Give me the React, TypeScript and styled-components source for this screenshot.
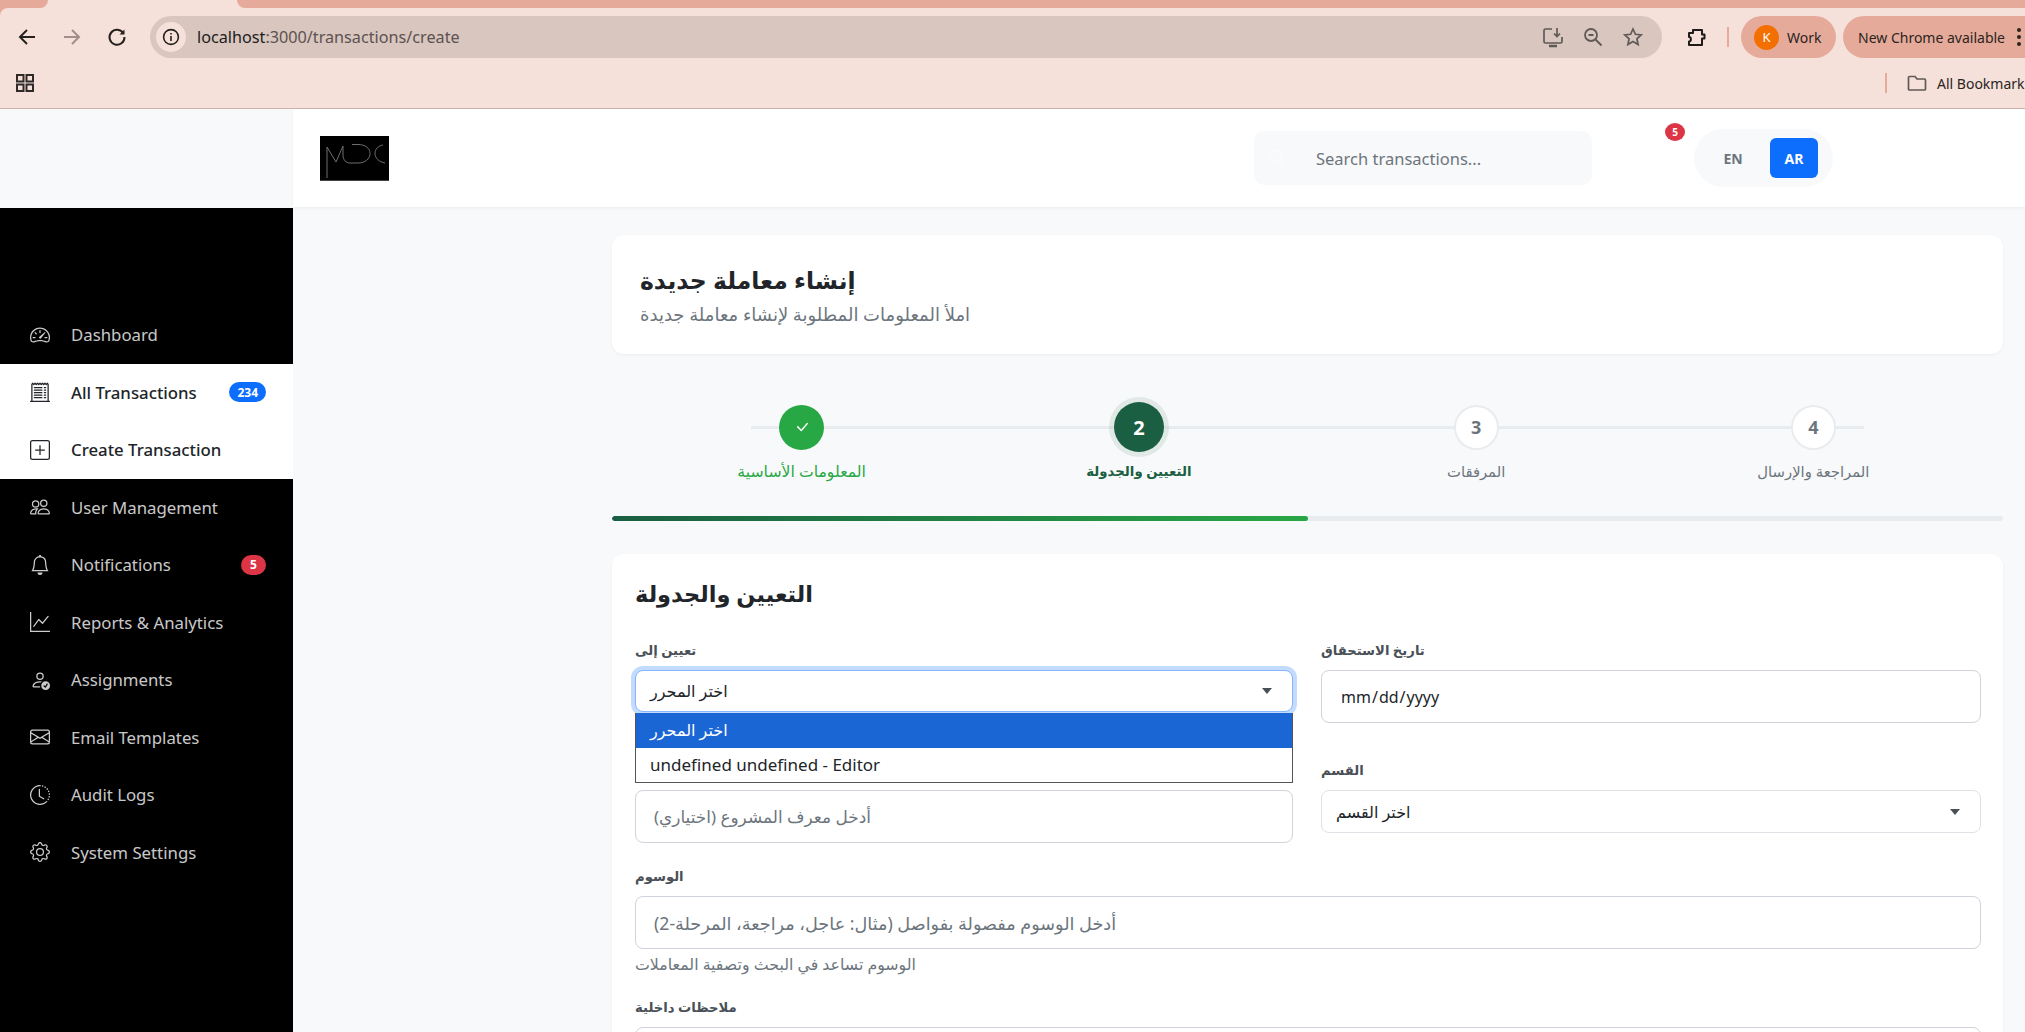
import React from 'react';
import styled, { createGlobalStyle } from 'styled-components';
import {
  BsBell,
  BsCheckLg,
  BsClockHistory,
  BsEnvelope,
  BsGear,
  BsGraphUp,
  BsPeople,
  BsPersonCheck,
  BsPlusSquare,
  BsReceiptCutoff,
  BsSpeedometer2,
} from 'react-icons/bs';

const FONT = `'Noto Sans', 'DejaVu Sans', sans-serif`;

const GlobalStyle = createGlobalStyle`
  html, body {
    margin: 0;
    padding: 0;
    height: 100%;
    overflow: hidden;
    background: #f8f9fa;
    font-family: ${FONT};
  }
  * { box-sizing: border-box; }
`;

const Page = styled.div`
  width: 2025px;
  height: 1032px;
  display: flex;
  flex-direction: column;
  overflow: hidden;
`;

/* browser chrome */
const ChromeFrame = styled.div`
  height: 109px;
  flex: none;
  background: #e5aa99;
  border-bottom: 1px solid #c9b3ac;
  display: flex;
  flex-direction: column;
`;

const TabStrip = styled.div`
  height: 8px;
  display: flex;
  background: #f5e1da;
`;

const TabEdge = styled.div<{ $side: 'left' | 'right' }>`
  background: #e5aa99;
  ${({ $side }) =>
    $side === 'left'
      ? `width: 48px; border-bottom-right-radius: 10px;`
      : `flex: 1; border-bottom-left-radius: 10px;`}
`;

const ActiveTab = styled.div`
  width: 189px;
  background: #f5e1da;
`;

const Toolbar = styled.div`
  height: 56px;
  display: flex;
  align-items: center;
  padding: 2px 0 0 15px;
  background: #f5e1da;
  border-top-left-radius: 8px;
  overflow: hidden;
`;

const NavButton = styled.div<{ $muted?: boolean }>`
  width: 24px;
  height: 24px;
  flex: none;
  margin-right: 21px;
  color: ${({ $muted }) => ($muted ? '#a08f8a' : '#26201e')};
`;

const UrlBar = styled.div`
  width: 1512px;
  height: 42px;
  flex: none;
  display: flex;
  align-items: center;
  padding: 0 18px 0 6px;
  border-radius: 21px;
  background: #d8c6bf;
`;

const InfoBubble = styled.div`
  width: 30px;
  height: 30px;
  flex: none;
  border-radius: 50%;
  background: #f5e1da;
  display: flex;
  align-items: center;
  justify-content: center;
  color: #26201e;
`;

const UrlText = styled.div`
  margin-left: 11px;
  font-size: 16.2px;
  color: #5d5250;
  white-space: nowrap;
`;

const UrlHost = styled.span`
  color: #221d1c;
`;

const UrlIcons = styled.div`
  margin-left: auto;
  display: flex;
  align-items: center;
  gap: 18px;
  color: #5f5a58;
`;

const ExtensionSlot = styled.div`
  width: 24px;
  height: 24px;
  flex: none;
  margin-left: 22px;
  color: #1f1b1a;
`;

const ChromeDivider = styled.div`
  width: 2px;
  height: 20px;
  flex: none;
  background: #e5aa99;
`;

const ToolbarDivider = styled(ChromeDivider)`
  margin-left: 19px;
`;

const ProfilePill = styled.div`
  width: 95px;
  height: 42px;
  flex: none;
  margin-left: 12px;
  border-radius: 21px;
  background: #e5aa99;
  display: flex;
  align-items: center;
  padding-left: 13px;
  gap: 8px;
  font-size: 14px;
  color: #2b2422;
`;

const Avatar = styled.div`
  width: 25px;
  height: 25px;
  border-radius: 50%;
  background: #f37000;
  color: #fff;
  font-size: 13px;
  display: flex;
  align-items: center;
  justify-content: center;
`;

const UpdatePill = styled.div`
  width: 220px;
  height: 42px;
  flex: none;
  margin-left: 7px;
  border-radius: 21px;
  background: #e5aa99;
  display: flex;
  align-items: center;
  padding-left: 15px;
  gap: 12px;
  font-size: 14px;
  color: #2b2422;
  white-space: nowrap;
`;

const MenuDots = styled.span`
  display: flex;
  flex-direction: column;
  gap: 3px;

  i {
    width: 4px;
    height: 4px;
    border-radius: 50%;
    background: #2b2422;
    display: block;
  }
`;

const BookmarkBar = styled.div`
  flex: 1;
  display: flex;
  align-items: center;
  padding: 0 0 6px 15px;
  background: #f5e1da;
  overflow: hidden;
`;

const BookmarkRight = styled.div`
  margin-left: auto;
  width: 140px;
  flex: none;
  display: flex;
  align-items: center;
  gap: 10px;
  font-size: 14px;
  color: #2b2422;
  white-space: nowrap;
`;

const FolderSlot = styled.div`
  width: 20px;
  height: 20px;
  margin-left: 10px;
  flex: none;
  color: #5f5a58;
`;

/* app shell */
const Shell = styled.div`
  flex: 1;
  min-height: 0;
  display: flex;
`;

const Sidebar = styled.aside`
  width: 293px;
  flex: none;
  display: flex;
  flex-direction: column;
`;

const SidebarTop = styled.div`
  height: 99px;
  flex: none;
  background: #f8f9fa;
`;

const SidebarNav = styled.nav`
  flex: 1;
  background: #000;
  padding-top: 98px;
`;

const NavItem = styled.div<{ $active?: boolean }>`
  height: 57.5px;
  display: flex;
  align-items: center;
  padding: 0 27px 0 30px;
  font-size: 16.8px;
  font-weight: ${({ $active }) => ($active ? 500 : 400)};
  background: ${({ $active }) => ($active ? '#fff' : 'transparent')};
  color: ${({ $active }) => ($active ? '#212529' : 'rgba(255, 255, 255, 0.8)')};

  svg {
    flex: none;
    margin-right: 21px;
  }
`;

const NavBadge = styled.span<{ $tone: 'blue' | 'red' }>`
  margin-left: auto;
  height: 20px;
  min-width: 25px;
  padding: 0 8px;
  border-radius: 10px;
  background: ${({ $tone }) => ($tone === 'blue' ? '#0d6efd' : '#dc3545')};
  color: #fff;
  font-size: 12px;
  font-weight: 700;
  display: flex;
  align-items: center;
  justify-content: center;
`;

const MainColumn = styled.div`
  flex: 1;
  min-width: 0;
  display: flex;
  flex-direction: column;
`;

const Header = styled.header`
  height: 98px;
  flex: none;
  background: #fff;
  box-shadow: 0 1px 3px rgba(0, 0, 0, 0.06);
  display: flex;
  align-items: center;
  padding: 0 192px 0 27px;
  position: relative;
`;

const LogoBox = styled.div`
  width: 69px;
  height: 45px;
  flex: none;
  background: #000;
`;

const SearchBox = styled.div`
  width: 338px;
  height: 54px;
  margin-left: auto;
  display: flex;
  align-items: center;
  padding-left: 14px;
  gap: 30px;
  border-radius: 10px;
  background: #f8f9fa;
  color: #fbfcfd;
  font-size: 16.5px;
`;

const SearchPlaceholder = styled.span`
  color: #6c757d;
`;

const BellButton = styled.div`
  width: 40px;
  height: 40px;
  margin-left: 48px;
  flex: none;
  position: relative;
  color: #fff;
  display: flex;
  align-items: center;
  justify-content: center;
`;

const BellBadge = styled.span`
  position: absolute;
  top: -15px;
  right: -5px;
  width: 20px;
  height: 18px;
  border-radius: 50%;
  background: #dc3545;
  color: #fff;
  font-size: 10px;
  font-weight: 700;
  display: flex;
  align-items: center;
  justify-content: center;
`;

const LangToggle = styled.div`
  width: 139px;
  height: 58px;
  margin-left: 14px;
  flex: none;
  border-radius: 29px;
  background: #f8f9fa;
  display: flex;
  align-items: center;
  justify-content: flex-end;
  padding-right: 15px;
  gap: 13px;
`;

const LangButton = styled.div<{ $active?: boolean }>`
  width: 48px;
  height: 40px;
  border-radius: 6px;
  display: flex;
  align-items: center;
  justify-content: center;
  font-size: 14px;
  font-weight: 700;
  background: ${({ $active }) => ($active ? '#0d6efd' : 'transparent')};
  color: ${({ $active }) => ($active ? '#fff' : '#6c757d')};
`;

const Content = styled.main`
  flex: 1;
  min-height: 0;
  overflow: hidden;
  background: #f8f9fa;
  padding: 28px 22px 0 319px;
`;

const TitleCard = styled.section`
  height: 119px;
  padding: 27px 28px 0;
  border-radius: 12px;
  background: #fff;
  box-shadow: 0 1px 3px rgba(0, 0, 0, 0.05);
`;

const PageTitle = styled.h1`
  margin: 0;
  font-size: 23.5px;
  line-height: 36px;
  font-weight: 600;
  color: #212529;
`;

const PageSubtitle = styled.p`
  margin: 2px 0 0;
  font-size: 18px;
  line-height: 28px;
  color: #6c757d;
`;

const Stepper = styled.div`
  margin-top: 48px;
  height: 90px;
  padding: 0 21px;
  display: grid;
  grid-template-columns: repeat(4, 1fr);
  position: relative;

  &::before {
    content: '';
    position: absolute;
    left: 139px;
    right: 139px;
    top: 24px;
    height: 3px;
    background: #e9ecef;
  }
`;

const Step = styled.div`
  display: flex;
  flex-direction: column;
  align-items: center;
  position: relative;
`;

const StepCircleSlot = styled.div`
  height: 50px;
  display: flex;
  align-items: center;
  justify-content: center;
`;

const StepCircle = styled.div<{ $state: 'done' | 'current' | 'todo' }>`
  border-radius: 50%;
  display: flex;
  align-items: center;
  justify-content: center;
  font-weight: 700;
  ${({ $state }) =>
    $state === 'done' &&
    `width: 45px; height: 45px; background: #28a745; color: #fff;`}
  ${({ $state }) =>
    $state === 'current' &&
    `width: 50px; height: 50px; background: #1a5f42; color: #fff; font-size: 20px; box-shadow: 0 0 0 5px rgba(26, 95, 66, 0.1);`}
  ${({ $state }) =>
    $state === 'todo' &&
    `width: 45px; height: 45px; background: #fff; color: #6c757d; font-size: 18px; border: 2px solid #e9ecef;`}
`;

const StepLabel = styled.div<{ $state: 'done' | 'current' | 'todo' }>`
  margin-top: 9px;
  line-height: 21px;
  font-size: ${({ $state }) =>
    $state === 'done' ? '15.7px' : $state === 'current' ? '13.3px' : '14.8px'};
  font-weight: ${({ $state }) => ($state === 'current' ? 600 : 400)};
  color: ${({ $state }) =>
    $state === 'done' ? '#28a745' : $state === 'current' ? '#1a5f42' : '#6c757d'};
`;

const ProgressTrack = styled.div`
  margin-top: 24px;
  height: 5px;
  border-radius: 3px;
  background: #e9ecef;
  overflow: hidden;
`;

const ProgressFill = styled.div`
  height: 100%;
  border-radius: 3px;
  background: linear-gradient(90deg, #1a5f42, #28a745);
`;

const FormCard = styled.section`
  margin-top: 33px;
  padding: 22px 22px 40px 23px;
  border-radius: 12px;
  background: #fff;
  box-shadow: 0 1px 3px rgba(0, 0, 0, 0.05);
`;

const FormTitle = styled.h2`
  margin: 0 0 28px;
  font-size: 22.5px;
  line-height: 36px;
  font-weight: 600;
  color: #212529;
`;

const FormGrid = styled.div`
  display: grid;
  grid-template-columns: 658px 660px;
  column-gap: 28px;
  row-gap: 37px;
  margin-bottom: 23px;
`;

const Field = styled.div`
  position: relative;
  min-width: 0;
`;

const Label = styled.div`
  height: 21px;
  margin-bottom: 9px;
  font-size: 13.2px;
  line-height: 21px;
  font-weight: 600;
  color: #495057;
`;

const inputBase = `
  display: block;
  width: 100%;
  border: 1px solid #ced4da;
  border-radius: 8px;
  background: #fff;
  font-family: ${FONT};
  font-size: 16px;
  color: #212529;
  outline: none;
`;

const TextInput = styled.input<{ $size: number }>`
  ${inputBase}
  height: 53px;
  padding: 0 18px;
  font-size: ${({ $size }) => $size}px;
  text-align: left;

  &::placeholder {
    color: #6c757d;
    opacity: 1;
  }
`;

const DateInput = styled.input`
  ${inputBase}
  height: 53px;
  padding: 0 18px;
`;

const SelectBox = styled.div<{ $open?: boolean }>`
  ${inputBase}
  height: ${({ $open }) => ($open ? '42px' : '43px')};
  margin-top: ${({ $open }) => ($open ? '1px' : '0')};
  padding: 0 20px 0 14px;
  display: flex;
  align-items: center;
  justify-content: space-between;
  border-color: ${({ $open }) => ($open ? '#86b7fe' : '#dee2e6')};
  box-shadow: ${({ $open }) => ($open ? '0 0 0 4px rgba(13, 110, 253, 0.25)' : 'none')};
`;

const Caret = styled.span`
  width: 0;
  height: 0;
  border-left: 5px solid transparent;
  border-right: 5px solid transparent;
  border-top: 6px solid #495057;
`;

const OptionList = styled.div`
  position: absolute;
  left: 0;
  right: 0;
  top: 73px;
  z-index: 5;
  border: 1px solid #555;
  border-top: none;
  background: #fff;
  font-size: 16px;
  color: #212529;
`;

const Option = styled.div<{ $selected?: boolean }>`
  height: 34.5px;
  padding: 0 14px;
  display: flex;
  align-items: center;
  font-size: ${({ $selected }) => ($selected ? '16px' : '17px')};
  background: ${({ $selected }) => ($selected ? '#1a66d4' : '#fff')};
  color: ${({ $selected }) => ($selected ? '#fff' : '#212529')};
`;

const HelpText = styled.div`
  margin: 5px 0 23px;
  font-size: 15.8px;
  line-height: 20px;
  color: #6c757d;
`;

const NotesBox = styled.div`
  ${inputBase}
  height: 120px;
`;

const navItems = [
  { label: 'Dashboard', icon: BsSpeedometer2 },
  { label: 'All Transactions', icon: BsReceiptCutoff, active: true, badge: '234', tone: 'blue' as const },
  { label: 'Create Transaction', icon: BsPlusSquare, active: true },
  { label: 'User Management', icon: BsPeople },
  { label: 'Notifications', icon: BsBell, badge: '5', tone: 'red' as const },
  { label: 'Reports & Analytics', icon: BsGraphUp },
  { label: 'Assignments', icon: BsPersonCheck },
  { label: 'Email Templates', icon: BsEnvelope },
  { label: 'Audit Logs', icon: BsClockHistory },
  { label: 'System Settings', icon: BsGear },
];

const steps = [
  { label: 'المعلومات الأساسية', state: 'done' as const, mark: null },
  { label: 'التعيين والجدولة', state: 'current' as const, mark: '2' },
  { label: 'المرفقات', state: 'todo' as const, mark: '3' },
  { label: 'المراجعة والإرسال', state: 'todo' as const, mark: '4' },
];

const MdcLogo = () => (
  <svg width="69" height="45" viewBox="0 0 69 45" fill="none" stroke="#6f6f6f" strokeWidth="1">
    <path d="M7 42V11L16 26L23 10V19C23 24 26 27 30 27H38C45 27 50 23 50 17.5C50 12 45 8.5 38 8.5H32" />
    <path d="M63 9C58 10 55 13 55 17.5C55 22 59 26 65 27" />
    <path d="M0 44.5H69" stroke="#444" />
  </svg>
);

const App: React.FC = () => {
  return (
    <Page>
      <GlobalStyle />
      <ChromeFrame>
        <TabStrip>
          <TabEdge $side="left" />
          <ActiveTab />
          <TabEdge $side="right" />
        </TabStrip>
        <Toolbar>
          <NavButton>
            <svg width="24" height="24" viewBox="0 0 24 24" fill="none" stroke="currentColor" strokeWidth="2">
              <path d="M20 12H5M12 5l-7 7 7 7" />
            </svg>
          </NavButton>
          <NavButton $muted>
            <svg width="24" height="24" viewBox="0 0 24 24" fill="none" stroke="currentColor" strokeWidth="2">
              <path d="M4 12h15M12 5l7 7-7 7" />
            </svg>
          </NavButton>
          <NavButton>
            <svg width="24" height="24" viewBox="0 0 24 24" fill="none" stroke="currentColor" strokeWidth="2">
              <path d="M18.5 8.5A7.5 7.5 0 1 0 19.5 12" />
              <path d="M19.5 4.5v5h-5z" fill="currentColor" stroke="none" />
            </svg>
          </NavButton>
          <UrlBar>
            <InfoBubble>
              <svg width="18" height="18" viewBox="0 0 18 18" fill="none" stroke="currentColor" strokeWidth="1.6">
                <circle cx="9" cy="9" r="7.4" />
                <path d="M9 8v5M9 5v1.6" />
              </svg>
            </InfoBubble>
            <UrlText>
              <UrlHost>localhost</UrlHost>:3000/transactions/create
            </UrlText>
            <UrlIcons>
              <svg width="22" height="22" viewBox="0 0 22 22" fill="none" stroke="currentColor" strokeWidth="1.7">
                <path d="M10 3H3.5A1.5 1.5 0 0 0 2 4.5v11A1.5 1.5 0 0 0 3.5 17h15a1.5 1.5 0 0 0 1.5-1.5V11" />
                <path d="M7 20h8" strokeWidth="2.4" />
                <path d="M15 2v8M12 7.5l3 3 3-3" />
              </svg>
              <svg width="22" height="22" viewBox="0 0 22 22" fill="none" stroke="currentColor" strokeWidth="1.8">
                <circle cx="9" cy="9" r="6" />
                <path d="M6.5 9h5M13.5 13.5l6 6" />
              </svg>
              <svg width="22" height="22" viewBox="0 0 22 22" fill="none" stroke="currentColor" strokeWidth="1.7">
                <path d="M11 3l2.4 5.3 5.8.6-4.3 3.9 1.2 5.7L11 15.6l-5.1 2.9 1.2-5.7-4.3-3.9 5.8-.6z" />
              </svg>
            </UrlIcons>
          </UrlBar>
          <ExtensionSlot>
            <svg width="24" height="24" viewBox="0 0 24 24" fill="none" stroke="currentColor" strokeWidth="2" strokeLinejoin="round">
              <path d="M9 5h9v4.5h2.5v4H18V20H5v-3.5c2.5 0 2.5-4.5 0-4.5V8h4z" />
            </svg>
          </ExtensionSlot>
          <ToolbarDivider />
          <ProfilePill>
            <Avatar>K</Avatar>
            Work
          </ProfilePill>
          <UpdatePill>
            New Chrome available
            <MenuDots>
              <i />
              <i />
              <i />
            </MenuDots>
          </UpdatePill>
        </Toolbar>
        <BookmarkBar>
          <svg width="20" height="20" viewBox="0 0 20 20" fill="none" stroke="#2f2a28" strokeWidth="2">
            <rect x="2" y="2" width="6.5" height="6.5" />
            <rect x="11.5" y="2" width="6.5" height="6.5" />
            <rect x="2" y="11.5" width="6.5" height="6.5" />
            <rect x="11.5" y="11.5" width="6.5" height="6.5" />
          </svg>
          <BookmarkRight>
            <ChromeDivider />
            <FolderSlot>
              <svg width="20" height="20" viewBox="0 0 20 20" fill="none" stroke="currentColor" strokeWidth="1.7">
                <path d="M1.5 4.5A1 1 0 0 1 2.5 3.5H8l2 2.5h7.5a1 1 0 0 1 1 1V16a1 1 0 0 1-1 1h-15a1 1 0 0 1-1-1z" />
              </svg>
            </FolderSlot>
            All Bookmarks
          </BookmarkRight>
        </BookmarkBar>
      </ChromeFrame>

      <Shell>
        <Sidebar>
          <SidebarTop />
          <SidebarNav>
            {navItems.map((item) => {
              const Icon = item.icon;
              return (
                <NavItem key={item.label} $active={item.active}>
                  <Icon size={20} />
                  {item.label}
                  {item.badge && <NavBadge $tone={item.tone}>{item.badge}</NavBadge>}
                </NavItem>
              );
            })}
          </SidebarNav>
        </Sidebar>

        <MainColumn>
          <Header>
            <LogoBox>
              <MdcLogo />
            </LogoBox>
            <SearchBox>
              <svg width="18" height="18" viewBox="0 0 18 18" fill="none" stroke="currentColor" strokeWidth="1.5">
                <circle cx="7.5" cy="7.5" r="6" />
                <path d="M12 12l5 5" />
              </svg>
              <SearchPlaceholder>Search transactions...</SearchPlaceholder>
            </SearchBox>
            <BellButton>
              <BsBell size={20} />
              <BellBadge>5</BellBadge>
            </BellButton>
            <LangToggle>
              <LangButton>EN</LangButton>
              <LangButton $active>AR</LangButton>
            </LangToggle>
          </Header>

          <Content>
            <TitleCard>
              <PageTitle>إنشاء معاملة جديدة</PageTitle>
              <PageSubtitle>املأ المعلومات المطلوبة لإنشاء معاملة جديدة</PageSubtitle>
            </TitleCard>

            <Stepper>
              {steps.map((step) => (
                <Step key={step.label}>
                  <StepCircleSlot>
                    <StepCircle $state={step.state}>
                      {step.mark ?? <BsCheckLg size={16} />}
                    </StepCircle>
                  </StepCircleSlot>
                  <StepLabel $state={step.state}>{step.label}</StepLabel>
                </Step>
              ))}
            </Stepper>

            <ProgressTrack>
              <ProgressFill style={{ width: `${(696 / 1391) * 100}%` }} />
            </ProgressTrack>

            <FormCard>
              <FormTitle>التعيين والجدولة</FormTitle>
              <FormGrid>
                <Field>
                  <Label>تعيين إلى</Label>
                  <SelectBox $open>
                    اختر المحرر
                    <Caret />
                  </SelectBox>
                  <OptionList>
                    <Option $selected>اختر المحرر</Option>
                    <Option>undefined undefined - Editor</Option>
                  </OptionList>
                </Field>
                <Field>
                  <Label>تاريخ الاستحقاق</Label>
                  <DateInput type="date" readOnly />
                </Field>
                <Field>
                  {/* label sits behind the open dropdown in the picture */}
                  <Label />
                  <TextInput $size={16.9} dir="rtl" readOnly placeholder="أدخل معرف المشروع (اختياري)" />
                </Field>
                <Field>
                  <Label>القسم</Label>
                  <SelectBox>
                    اختر القسم
                    <Caret />
                  </SelectBox>
                </Field>
              </FormGrid>
              <Field>
                <Label>الوسوم</Label>
                <TextInput
                  $size={17.65}
                  dir="rtl"
                  readOnly
                  placeholder="أدخل الوسوم مفصولة بفواصل (مثال: عاجل، مراجعة، المرحلة-2)"
                />
              </Field>
              <HelpText>الوسوم تساعد في البحث وتصفية المعاملات</HelpText>
              <Field>
                <Label>ملاحظات داخلية</Label>
                <NotesBox />
              </Field>
            </FormCard>
          </Content>
        </MainColumn>
      </Shell>
    </Page>
  );
};

export default App;
